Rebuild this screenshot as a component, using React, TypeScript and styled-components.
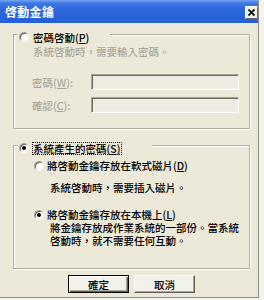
import React from "react";
import styled, { createGlobalStyle } from "styled-components";

const GlobalStyle = createGlobalStyle`
  html, body { margin: 0; padding: 0; }
  body {
    background: #F4F3EE;
    font-family: "Noto Sans CJK TC", "Noto Sans", sans-serif;
  }
  * { box-sizing: border-box; }
`;

const Screen = styled.div`
  width: 264px;
  height: 300px;
  overflow: hidden;
  background: #f4f3ee;
`;

const Window = styled.div`
  width: 259px;
  height: 298px;
  background: #ece9d8;
  border-right: 1px solid #8e8c80;
  border-bottom: 1px solid #8e8c80;
  display: flex;
  flex-direction: column;
`;

const TitleBar = styled.div`
  height: 23px;
  flex: none;
  background: linear-gradient(
    to bottom,
    #76a4f3 0px,
    #4079e6 3px,
    #2b65dc 10px,
    #2460d6 100%
  );
  display: flex;
  align-items: flex-start;
  justify-content: space-between;
  padding-left: 5px;
`;

const Title = styled.span`
  color: #fff;
  font-weight: 700;
  font-size: 12px;
  line-height: 14px;
  margin-top: 5px;
  letter-spacing: 0.3px;
`;

const CloseButton = styled.div`
  width: 13px;
  height: 13px;
  margin-top: 6px;
  background: #eeeeea;
  border: 1px solid;
  border-color: #ffffff #6a6a66 #6a6a66 #ffffff;
  display: flex;
  align-items: center;
  justify-content: center;
`;

const Client = styled.div`
  padding: 11px 0 0 13px;
  display: flex;
  flex-direction: column;
  font-size: 10.5px;
  font-weight: 500;
  line-height: 13px;
  color: #000;
`;

const GroupBox = styled.div<{ $h: number; $mt?: number }>`
  position: relative;
  width: 237px;
  height: ${(p) => p.$h}px;
  margin-top: ${(p) => p.$mt ?? 0}px;
  border: 1px solid #b2af9f;
  box-shadow: inset 1px 1px 0 #fff, 1px 1px 0 #fff;
  display: flex;
  flex-direction: column;
`;

const Caption = styled.div<{ $w: number }>`
  position: absolute;
  top: -4px;
  left: 4px;
  width: ${(p) => p.$w}px;
  height: 12px;
  background: #ece9d8;
  display: flex;
  align-items: center;
  gap: 4px;
  padding-left: 1px;
  white-space: nowrap;
`;

const Radio = styled.span<{ $checked?: boolean }>`
  position: relative;
  flex: none;
  width: 10px;
  height: 10px;
  border-radius: 50%;
  background: #fff;
  border: 1px solid;
  border-color: #a09e90 #f6f5ef #f6f5ef #a09e90;
  box-shadow: inset 1px 1px 0 #66645a;
  &::after {
    content: "";
    display: ${(p) => (p.$checked ? "block" : "none")};
    position: absolute;
    left: 2px;
    top: 2px;
    width: 4px;
    height: 4px;
    border-radius: 50%;
    background: #000;
  }
`;

const FocusLabel = styled.span`
  display: block;
  line-height: 11px;
  height: 11px;
  padding-right: 1px;
  outline: 1px dotted #000;
`;

const U = styled.span`
  text-decoration: underline;
`;

const GroupBody = styled.div<{ $pt: number; $pl: number }>`
  padding-top: ${(p) => p.$pt}px;
  padding-left: ${(p) => p.$pl}px;
  display: flex;
  flex-direction: column;
`;

const Desc = styled.div<{ $disabled?: boolean; $mt?: number; $indent?: number }>`
  color: ${(p) => (p.$disabled ? "#aca899" : "#000")};
  margin-top: ${(p) => p.$mt ?? 0}px;
  padding-left: ${(p) => p.$indent ?? 0}px;
  white-space: nowrap;
`;

const FieldGrid = styled.div`
  margin-top: 16px;
  display: grid;
  grid-template-columns: 58px 148px;
  grid-auto-rows: 16px;
  row-gap: 7px;
  align-items: center;
`;

const FieldLabel = styled.span`
  color: #aca899;
  margin-left: -1px;
`;

const Field = styled.div`
  height: 16px;
  width: 148px;
  background: #eeece2;
  border: 1px solid;
  border-color: #a3a194 #ffffff #ffffff #a3a194;
  box-shadow: inset 1px 1px 0 #6f6d62, inset -1px -1px 0 #f2f0e6;
`;

const OptionRow = styled.div<{ $mt?: number }>`
  display: flex;
  align-items: center;
  gap: 3px;
  height: 13px;
  margin-top: ${(p) => p.$mt ?? 0}px;
  white-space: nowrap;
`;

const ButtonRow = styled.div`
  margin-top: 6px;
  padding-left: 55px;
  display: flex;
  gap: 5px;
`;

const Button = styled.div<{ $default?: boolean }>`
  width: 61px;
  height: 18px;
  background: #f2f1ea;
  display: flex;
  align-items: center;
  justify-content: center;
  font-size: 10.5px;
  border: 1px solid;
  border-color: ${(p) =>
    p.$default ? "#000 #000 #000 #000" : "#ffffff #5e5c53 #5e5c53 #ffffff"};
  box-shadow: ${(p) =>
    p.$default
      ? "inset 1px 1px 0 #ffffff, inset -1px -1px 0 #5e5c53, inset -2px -2px 0 #aca899"
      : "inset -1px -1px 0 #aca899"};
`;

export default function App() {
  return (
    <Screen>
      <GlobalStyle />
      <Window>
        <TitleBar>
          <Title>啓動金鑰</Title>
          <CloseButton>
            <svg width="7" height="7" viewBox="0 0 7 7">
              <path d="M0.5 0.5 L6.5 6.5 M6.5 0.5 L0.5 6.5" stroke="#000" strokeWidth="1.8" />
            </svg>
          </CloseButton>
        </TitleBar>
        <Client>
          <GroupBox $h={95}>
            <Caption $w={92}>
              <Radio />
              <span>
                密碼啓動(<U>P</U>)
              </span>
            </Caption>
            <GroupBody $pt={10} $pl={19}>
              <Desc $disabled>系統啓動時，需要輸入密碼。</Desc>
              <FieldGrid>
                <FieldLabel>
                  密碼(<U>W</U>):
                </FieldLabel>
                <Field />
                <FieldLabel>
                  確認(<U>C</U>):
                </FieldLabel>
                <Field />
              </FieldGrid>
            </GroupBody>
          </GroupBox>

          <GroupBox $h={124} $mt={16}>
            <Caption $w={134}>
              <Radio $checked />
              <FocusLabel>
                系統產生的密碼(<U>S</U>)
              </FocusLabel>
            </Caption>
            <GroupBody $pt={13} $pl={20}>
              <OptionRow>
                <Radio />
                <span>
                  將啓動金鑰存放在軟式磁片(<U>D</U>)
                </span>
              </OptionRow>
              <Desc $mt={9} $indent={16}>
                系統啓動時，需要插入磁片。
              </Desc>
              <OptionRow $mt={14}>
                <Radio $checked />
                <span>
                  將啓動金鑰存放在本機上(<U>L</U>)
                </span>
              </OptionRow>
              <Desc $indent={16}>
                將金鑰存放成作業系統的一部份。當系統
                <br />
                啓動時，就不需要任何互動。
              </Desc>
            </GroupBody>
          </GroupBox>

          <ButtonRow>
            <Button $default>確定</Button>
            <Button>取消</Button>
          </ButtonRow>
        </Client>
      </Window>
    </Screen>
  );
}
